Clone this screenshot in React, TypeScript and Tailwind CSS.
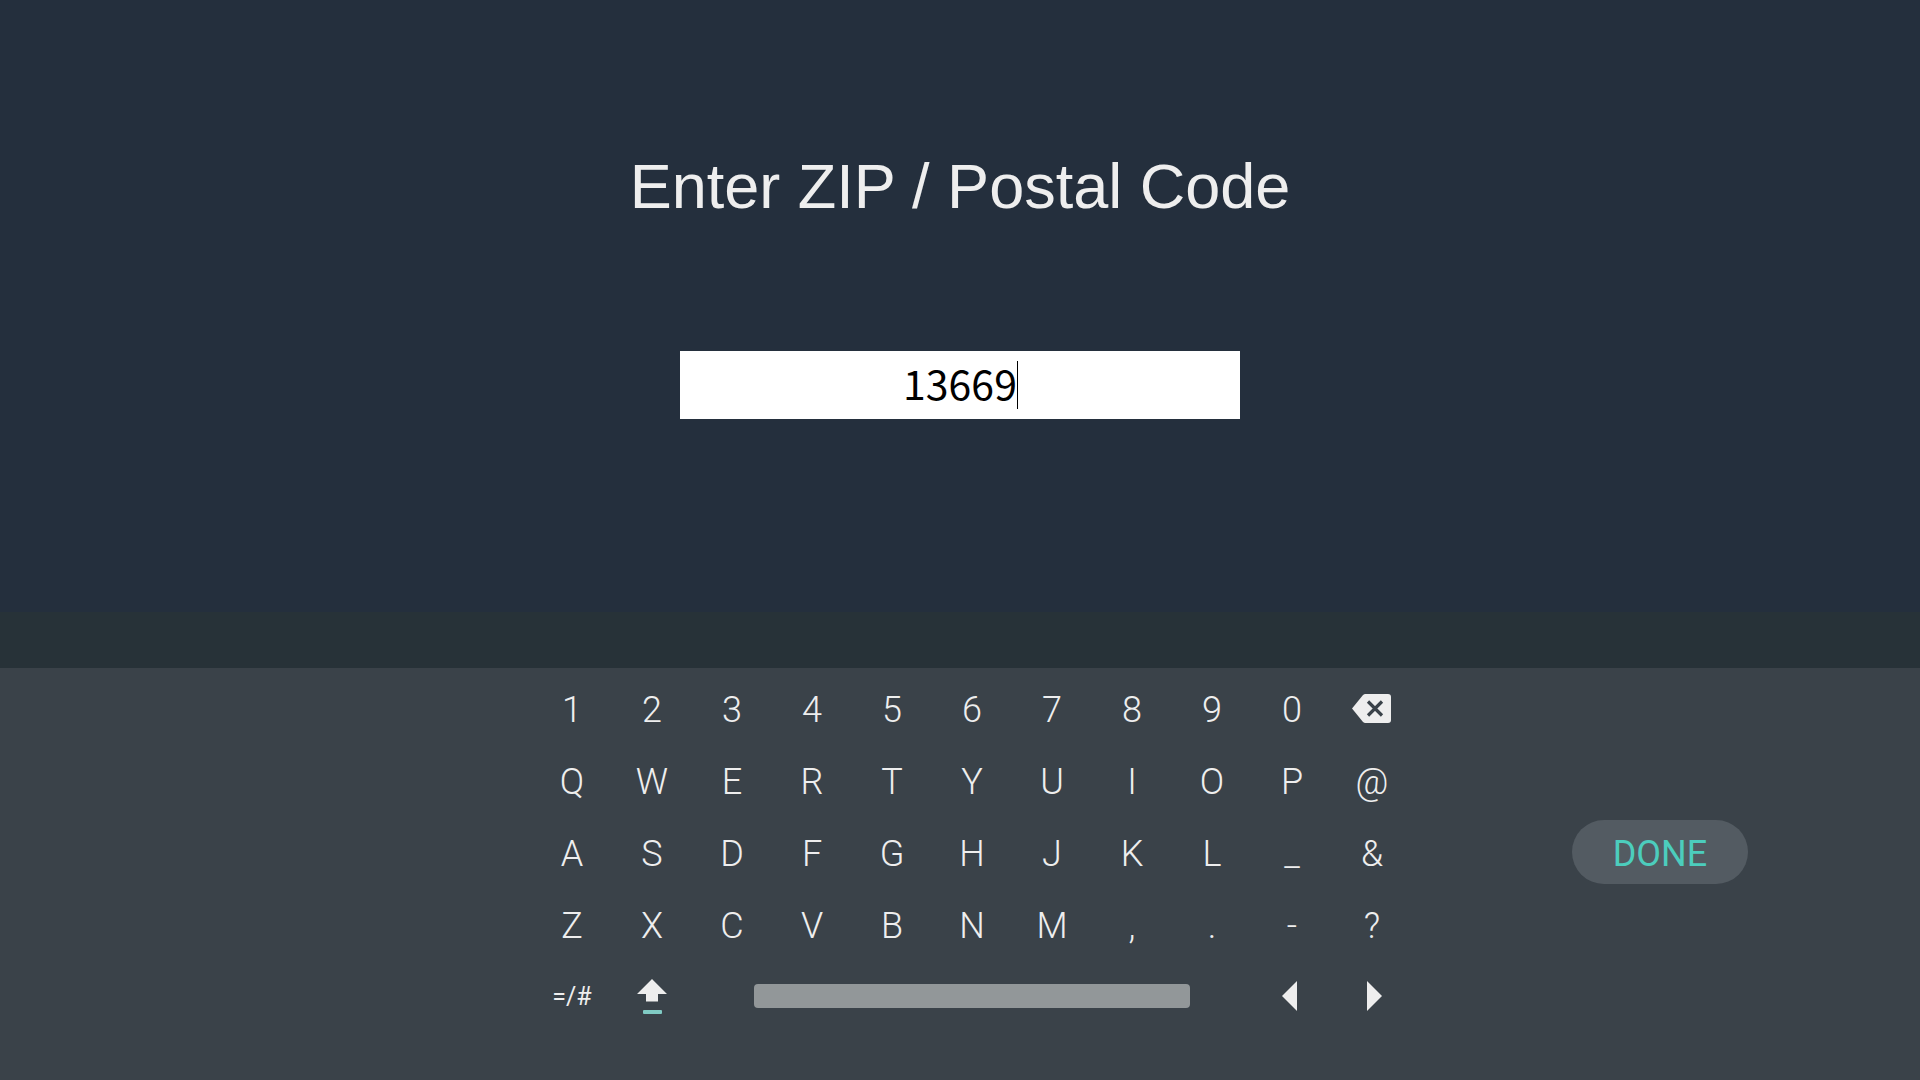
import React, { useState } from 'react';
import clsx from 'clsx';

const ROWS: string[][] = [
  ['1', '2', '3', '4', '5', '6', '7', '8', '9', '0', 'backspace'],
  ['Q', 'W', 'E', 'R', 'T', 'Y', 'U', 'I', 'O', 'P', '@'],
  ['A', 'S', 'D', 'F', 'G', 'H', 'J', 'K', 'L', '_', '&'],
  ['Z', 'X', 'C', 'V', 'B', 'N', 'M', ',', '.', '-', '?'],
];

const BackspaceIcon = () => (
  <svg width="40" height="32" viewBox="0 0 40 32" aria-hidden="true">
    <path
      d="M13.5 0H36Q39 0 39 3V26Q39 29 36 29H13.5Q12 29 10.8 27.7L0 14.5L10.8 1.3Q12 0 13.5 0Z"
      fill="#eeeeee"
    />
    <path d="M16 7.5L30 21.5M30 7.5L16 21.5" stroke="#3a4249" strokeWidth="3.2" />
  </svg>
);

const ShiftIcon = () => (
  <svg width="30" height="38" viewBox="0 0 30 38" aria-hidden="true">
    <path d="M15 2L30 17H21V24.5H9V17H0Z" fill="#eeeeee" />
    <rect x="6" y="33" width="19" height="4" rx="1" fill="#80cbc4" />
  </svg>
);

const ArrowIcon = ({ direction }: { direction: 'left' | 'right' }) => (
  <svg width="20" height="30" viewBox="0 0 20 30" aria-hidden="true">
    <path d={direction === 'left' ? 'M15 0V30L0 15Z' : 'M5 0V30L20 15Z'} fill="#eeeeee" />
  </svg>
);

interface KeyProps {
  label: string;
  className?: string;
  onPress?: () => void;
  children: React.ReactNode;
}

const Key = ({ label, className, onPress, children }: KeyProps) => (
  <button
    type="button"
    aria-label={label}
    onClick={onPress}
    className={clsx('flex items-center justify-center', className)}
  >
    {children}
  </button>
);

export default function App() {
  const [zip, setZip] = useState('13669');

  const press = (key: string) =>
    setZip((value) => (key === 'backspace' ? value.slice(0, -1) : value + key));

  return (
    <div className="flex min-h-screen flex-col bg-[#242f3d] text-[#eeeeee]">
      <main className="flex flex-1 flex-col items-center pt-36">
        <label
          htmlFor="zip"
          className="font-['Liberation_Sans',sans-serif] text-[63px] leading-[84px]"
        >
          Enter ZIP / Postal Code
        </label>
        <div className="relative mt-[123px] w-[560px]">
          <input
            id="zip"
            type="text"
            value={zip}
            onChange={(e) => setZip(e.target.value)}
            className="h-17 w-full bg-white pb-1.5 text-center font-['Noto_Sans_CJK_SC',sans-serif] text-[41px] text-black caret-transparent outline-none"
          />
          {/* Text cursor */}
          <span className="absolute left-1/2 top-2.5 ml-[57px] h-12 w-px bg-black" />
        </div>
      </main>

      <div className="h-14 bg-[#273238]" />

      <section className="flex bg-[#3a4249] pt-1.5 pb-[50px] pl-6 font-[Roboto,sans-serif]">
        <div className="flex-1" />

        <div className="grid grid-cols-[repeat(11,80px)] text-4xl font-light">
          {ROWS.flat().map((key) => (
            <Key key={key} label={key} className="h-18" onPress={() => press(key)}>
              {key === 'backspace' ? <BackspaceIcon /> : key}
            </Key>
          ))}

          <Key label="Symbols" className="h-17 pt-0.5 text-[25px] font-normal">
            =/#
          </Key>
          <Key label="Shift" className="h-17">
            <ShiftIcon />
          </Key>
          <Key label="Space" className="col-span-7 h-17" onPress={() => press(' ')}>
            <span className="h-6 w-[436px] rounded-[4px] bg-[#929799]" />
          </Key>
          <Key label="Cursor left" className="h-17">
            <ArrowIcon direction="left" />
          </Key>
          <Key label="Cursor right" className="h-17">
            <ArrowIcon direction="right" />
          </Key>
        </div>

        <div className="flex h-[356px] flex-1 items-center">
          <button
            type="button"
            className="ml-40 h-16 w-44 rounded-full bg-[#535b62] pt-1 text-4xl text-[#4ccdbd]"
          >
            DONE
          </button>
        </div>
      </section>
    </div>
  );
}
